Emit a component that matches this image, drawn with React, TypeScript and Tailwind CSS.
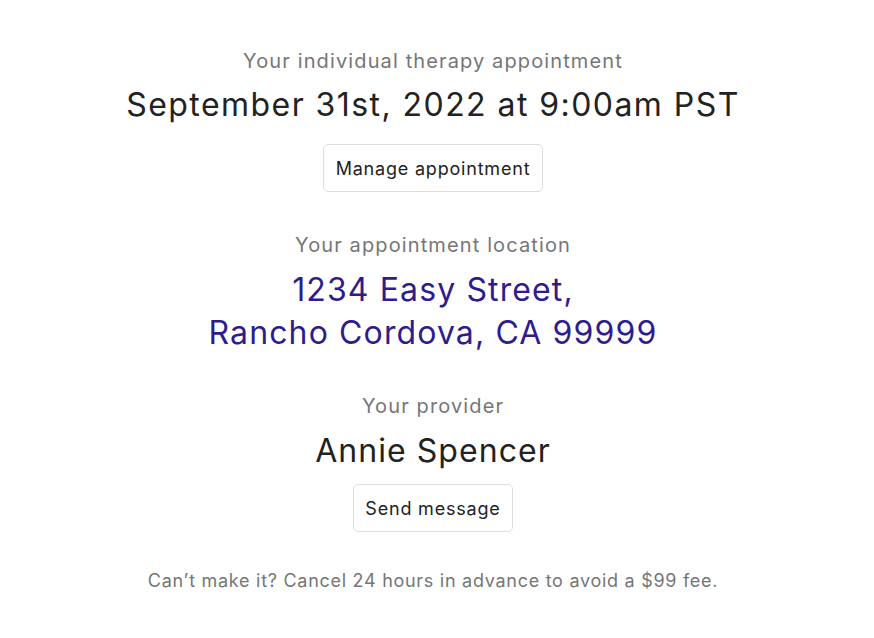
export default function App() {
  return (
    <div className="min-h-screen w-full bg-white text-[#222222]" style={{ fontFamily: "Inter, 'Noto Sans', sans-serif" }}>
      <main className="flex flex-col items-center pt-[46px] pr-2 text-center tracking-[0.05em]">
        {/* Appointment time */}
        <section className="flex flex-col items-center">
          <p className="text-[20px] leading-[30px] tracking-[0.056em] text-[#767676]">Your individual therapy appointment</p>
          <h1 className="mt-[7px] text-[32px] leading-[44px] tracking-[0.045em]">September 31st, 2022 at 9:00am PST</h1>
          <button className="mt-[17px] h-[48px] rounded-[5px] border border-[#dedede] px-[12px] text-[18px] text-[#222222]">
            Manage appointment
          </button>
        </section>

        {/* Location */}
        <section className="mt-[38px] flex flex-col items-center">
          <p className="text-[20px] leading-[30px] tracking-[0.056em] text-[#767676]">Your appointment location</p>
          <h2 className="mt-[8px] text-[32px] leading-[43px] tracking-[0.035em] text-[#2e1c8f]">
            1234 Easy Street,
            <br />
            Rancho Cordova, CA 99999
          </h2>
        </section>

        {/* Provider */}
        <section className="mt-[37px] flex flex-col items-center">
          <p className="text-[20px] leading-[30px] tracking-[0.056em] text-[#767676]">Your provider</p>
          <h2 className="mt-[8px] text-[32px] leading-[44px] tracking-[0.033em]">Annie Spencer</h2>
          <button className="mt-[11px] h-[48px] rounded-[5px] border border-[#dedede] px-[11px] text-[18px] text-[#222222]">
            Send message
          </button>
        </section>

        <p className="mt-[35px] text-[18px] leading-[28px] tracking-[0.04em] text-[#767676]">
          Can’t make it? Cancel 24 hours in advance to avoid a $99 fee.
        </p>
      </main>
    </div>
  );
}
